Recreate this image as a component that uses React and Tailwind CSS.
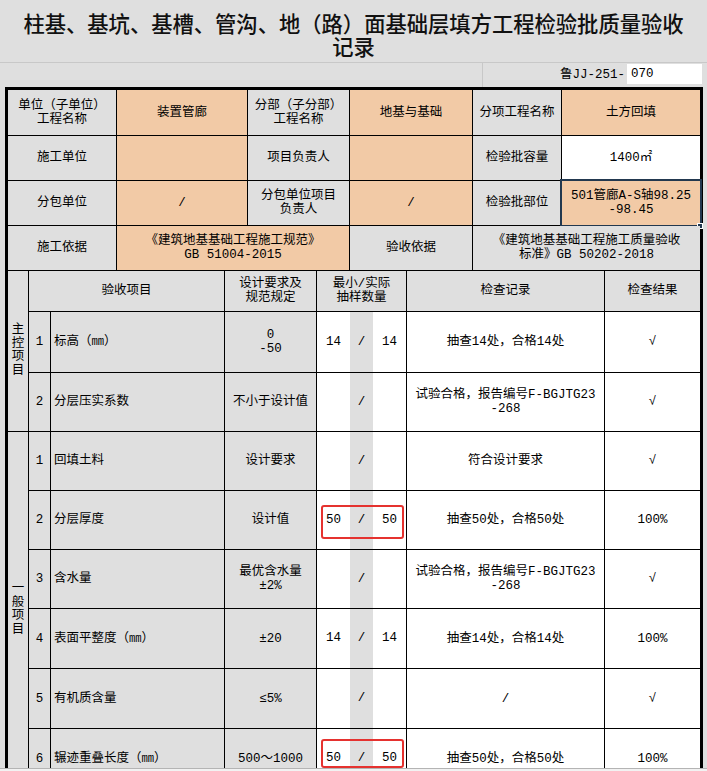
import React from 'react'

const gray = 'bg-[#dfdfdf]'
const orange = 'bg-[#f2caa6]'
const white = 'bg-white'

function Cell({ bg = gray, className = '', children }) {
  return (
    <div className={`relative flex items-center justify-center text-center leading-[14px] ${bg} ${className}`}>
      {children}
    </div>
  )
}

function Lines({ lines }) {
  return (
    <div className="flex flex-col items-center">
      {lines.map((line, i) => (
        <span key={i} className="whitespace-pre">{line}</span>
      ))}
    </div>
  )
}

function Vertical({ text }) {
  return (
    <div className="flex flex-col items-center leading-[13.5px]">
      {text.split('').map((ch, i) => (
        <span key={i}>{ch}</span>
      ))}
    </div>
  )
}

const rows = [
  { n: '1', name: '标高（㎜）', req: ['0', '-50'], a: '14', b: '14', rec: ['抽查14处，合格14处'], res: '√' },
  { n: '2', name: '分层压实系数', req: ['不小于设计值'], a: '', b: '', rec: ['试验合格，报告编号F-BGJTG23', '-268'], res: '√' },
  { n: '1', name: '回填土料', req: ['设计要求'], a: '', b: '', rec: ['符合设计要求'], res: '√' },
  { n: '2', name: '分层厚度', req: ['设计值'], a: '50', b: '50', rec: ['抽查50处，合格50处'], res: '100%', mark: 'a' },
  { n: '3', name: '含水量', req: ['最优含水量', '±2%'], a: '', b: '', rec: ['试验合格，报告编号F-BGJTG23', '-268'], res: '√' },
  { n: '4', name: '表面平整度（㎜）', req: ['±20'], a: '14', b: '14', rec: ['抽查14处，合格14处'], res: '100%' },
  { n: '5', name: '有机质含量', req: ['≤5%'], a: '', b: '', rec: ['/'], res: '√' },
  { n: '6', name: '辗迹重叠长度（㎜）', req: ['500～1000'], a: '50', b: '50', rec: ['抽查50处，合格50处'], res: '100%', mark: 'b' },
]

function ItemRow({ row }) {
  return (
    <>
      <Cell>{row.n}</Cell>
      <Cell className="justify-start pl-[3px] text-left">{row.name}</Cell>
      <Cell>
        <Lines lines={row.req} />
      </Cell>
      <div className="relative flex">
        <div className="flex w-[33px] items-center justify-center bg-white">{row.a}</div>
        <div className="flex w-[23px] items-center justify-center bg-[#dfdfdf]">/</div>
        <div className="flex w-[33px] items-center justify-center bg-white">{row.b}</div>
        {row.mark === 'a' && (
          <div className="absolute left-[4px] top-[14px] h-[34px] w-[83px] rounded-[3px] border-2 border-[#e5322f]" />
        )}
        {row.mark === 'b' && (
          <div className="absolute left-[4px] top-[10px] h-[29px] w-[83px] rounded-[3px] border-2 border-[#e5322f]" />
        )}
      </div>
      <Cell bg={white}>
        <Lines lines={row.rec} />
      </Cell>
      <Cell bg={white}>{row.res}</Cell>
    </>
  )
}

export default function App() {
  return (
    <div className="relative h-[771px] w-[707px] overflow-hidden bg-[#dfdfdf] font-['Liberation_Mono','Noto_Sans_CJK_SC',monospace] text-[12.5px] text-black">
      <div className="h-[63px] border-b border-[#c8c8c8] pt-[11px] text-center font-['Noto_Sans_CJK_SC',sans-serif] text-[21.3px] font-medium leading-[23px] text-[#111]">
        柱基、基坑、基槽、管沟、地（路）面基础层填方工程检验批质量验收
        <br />
        记录
      </div>

      <div className="flex h-[24px]">
        <div className="h-full w-[483px] border-r border-[#c8c8c8]" />
        <div className="flex flex-1 items-start justify-end pr-[5px]">
          <span className="mt-[3px]">鲁JJ-251-</span>
          <div className="ml-[2px] mt-px flex h-[20px] w-[75px] items-center bg-white pl-[4px]">070</div>
        </div>
      </div>

      <div className="ml-[5px] flex w-[698px] flex-col gap-px border-x-[3px] border-t-[3px] border-black bg-black">
        <div className="grid grid-cols-[108px_130px_101px_122px_88px_138px] grid-rows-[45px_44px_44px_44px] gap-px bg-black">
          <Cell><Lines lines={['单位（子单位）', '工程名称']} /></Cell>
          <Cell bg={orange}>装置管廊</Cell>
          <Cell><Lines lines={['分部（子分部）', '工程名称']} /></Cell>
          <Cell bg={orange}>地基与基础</Cell>
          <Cell>分项工程名称</Cell>
          <Cell bg={orange}>土方回填</Cell>

          <Cell>施工单位</Cell>
          <Cell bg={orange} />
          <Cell>项目负责人</Cell>
          <Cell bg={orange} />
          <Cell>检验批容量</Cell>
          <Cell bg={white}>1400㎡</Cell>

          <Cell>分包单位</Cell>
          <Cell bg={orange}>/</Cell>
          <Cell><Lines lines={['分包单位项目', '负责人']} /></Cell>
          <Cell bg={orange}>/</Cell>
          <Cell>检验批部位</Cell>
          <Cell bg={orange}>
            <Lines lines={['501管廊A-S轴98.25', '-98.45']} />
            <div className="absolute -inset-[2px] border-2 border-[#22384f]" />
            <div className="absolute -bottom-[4px] -right-[3px] h-[6px] w-[6px] border border-white bg-[#22384f]" />
          </Cell>

          <Cell>施工依据</Cell>
          <Cell bg={orange} className="col-span-2">
            <Lines lines={['《建筑地基基础工程施工规范》', 'GB 51004-2015']} />
          </Cell>
          <Cell>验收依据</Cell>
          <Cell className="col-span-2">
            <Lines lines={['《建筑地基基础工程施工质量验收', '标准》GB 50202-2018']} />
          </Cell>
        </div>

        <div className="grid grid-cols-[20px_21px_173px_91px_89px_197px_95px] grid-rows-[40px_60px_58px_58px_58px_58px_59px_59px_59px] gap-px bg-black">
          <Cell className="row-span-3">
            <Vertical text="主控项目" />
          </Cell>
          <Cell className="col-span-2">验收项目</Cell>
          <Cell><Lines lines={['设计要求及', '规范规定']} /></Cell>
          <Cell><Lines lines={['最小/实际', '抽样数量']} /></Cell>
          <Cell>检查记录</Cell>
          <Cell>检查结果</Cell>

          <ItemRow row={rows[0]} />
          <ItemRow row={rows[1]} />

          <Cell className="row-span-6">
            <Vertical text="一般项目" />
          </Cell>
          {rows.slice(2).map((row, i) => (
            <ItemRow key={i} row={row} />
          ))}
        </div>
      </div>

      <div className="absolute bottom-0 left-0 h-[3px] w-full border-t border-[#b4b4b4] bg-[#f2f2f2]" />
    </div>
  )
}
